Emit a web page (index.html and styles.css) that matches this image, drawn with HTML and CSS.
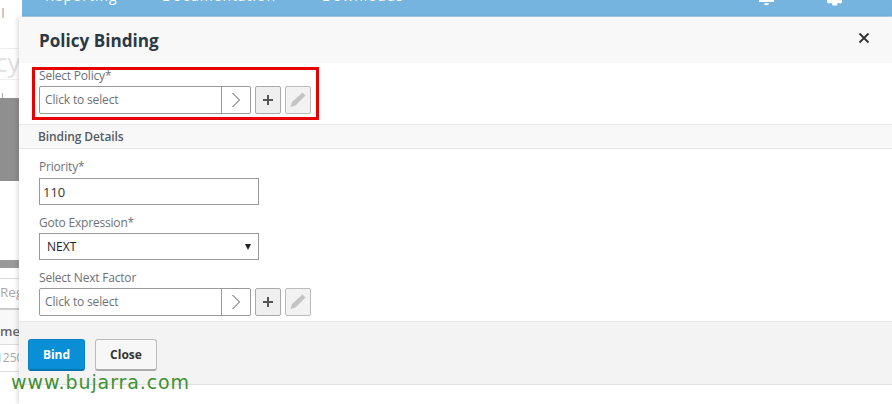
FILE: index.html
```html
<!DOCTYPE html>
<html lang="en">

<head>
    <meta charset="UTF-8">
    <meta name="viewport" content="width=device-width, initial-scale=1.0">
    <title>Policy Binding</title>
    <link rel="stylesheet" href="styles.css">
</head>

<body>
    <!-- Page behind the panel -->
    <div class="page">
        <div class="behind">
            <div class="behind-tick">I</div>
            <div class="behind-title">cy</div>
            <div class="behind-tick-2"></div>
            <div class="behind-grey"></div>
            <div class="behind-gap"></div>
            <div class="behind-band"></div>
            <div class="behind-gap-2"></div>
            <div class="behind-search">Reg</div>
            <div class="behind-head">me</div>
            <div class="behind-value">1250</div>
        </div>
        <div class="topbar">
            <div class="nav">
                <span class="nav-link nav-reporting">Reporting</span>
                <span class="nav-link nav-docs">Documentation</span>
                <span class="nav-link nav-downloads">Downloads</span>
                <svg class="nav-icon nav-bell" width="16" height="6" viewBox="0 0 16 6">
                    <path d="M0 0h15v2H0z M5 3.200h5c0 1.300-1 2-2.500 2S5 4.500 5 3.200z" fill="#fff" />
                </svg>
                <svg class="nav-icon nav-gear" width="16" height="6" viewBox="0 0 16 6">
                    <path d="M0 0h15v2.500l-1.500 1-2-.5-1 .5-.5 2H5.500l-.5-2-1-.5-2 .5-2-1z" fill="#fff" />
                </svg>
            </div>
        </div>
    </div>

    <!-- Policy Binding panel -->
    <div class="panel">
        <div class="panel-header">
            <h1>Policy Binding</h1>
            <svg class="close" width="12" height="12" viewBox="0 0 12 12">
                <path d="M1.500 1.500l9 9M10.500 1.500l-9 9" stroke="#333" stroke-width="1.800" fill="none" />
            </svg>
        </div>

        <div class="panel-top">
            <label>Select Policy*</label>
            <div class="picker-row">
                <div class="picker">
                    <span class="picker-text">Click to select</span>
                    <span class="picker-arrow">
                        <svg width="10" height="16" viewBox="0 0 10 16">
                            <path d="M1.500 1l7 7-7 7" stroke="#555" stroke-width="1" fill="none" />
                        </svg>
                    </span>
                </div>
                <button class="icon-btn" type="button">
                    <svg width="12" height="12" viewBox="0 0 12 12">
                        <path d="M5 1h2v4h4v2H7v4H5V7H1V5h4z" fill="#555" />
                    </svg>
                </button>
                <button class="icon-btn disabled" type="button">
                    <svg width="18" height="18" viewBox="0 0 18 18">
                        <path d="M13.500 1.500l3 3-10 10-5 1.500 1.500-5z" fill="#c4c4c4" />
                    </svg>
                </button>
            </div>
            <div class="highlight"></div>
        </div>

        <div class="section-title">Binding Details</div>

        <div class="panel-body">
            <label>Priority*</label>
            <input class="field" type="text" value="110">

            <label>Goto Expression*</label>
            <div class="field select">
                <span>NEXT</span>
                <span class="select-arrow"></span>
            </div>

            <label>Select Next Factor</label>
            <div class="picker-row">
                <div class="picker">
                    <span class="picker-text">Click to select</span>
                    <span class="picker-arrow">
                        <svg width="10" height="16" viewBox="0 0 10 16">
                            <path d="M1.500 1l7 7-7 7" stroke="#555" stroke-width="1" fill="none" />
                        </svg>
                    </span>
                </div>
                <button class="icon-btn" type="button">
                    <svg width="12" height="12" viewBox="0 0 12 12">
                        <path d="M5 1h2v4h4v2H7v4H5V7H1V5h4z" fill="#555" />
                    </svg>
                </button>
                <button class="icon-btn disabled" type="button">
                    <svg width="18" height="18" viewBox="0 0 18 18">
                        <path d="M13.500 1.500l3 3-10 10-5 1.500 1.500-5z" fill="#c4c4c4" />
                    </svg>
                </button>
            </div>
        </div>

        <div class="panel-footer">
            <button class="btn btn-primary" type="button">Bind</button>
            <button class="btn" type="button">Close</button>
        </div>
    </div>

    <div class="watermark">www.bujarra.com</div>
</body>

</html>
```

FILE: styles.css
```css
html,
body {
    margin: 0;
    padding: 0;
    height: 404px;
    overflow: hidden;
    background-color: #fff;
    font-family: "Open Sans", Arial, sans-serif;
}

.page {
    position: relative;
    height: 404px;
}

.topbar {
    position: absolute;
    top: 0;
    left: 22px;
    right: 0;
    height: 16px;
    background-color: #74b4de;
    border-bottom: 1px solid #a9cde6;
    overflow: hidden;
}

.nav {
    position: relative;
    height: 16px;
}

.nav-link {
    position: absolute;
    top: -16px;
    color: #fff;
    font-size: 14px;
    line-height: 24px;
    letter-spacing: 0.95px;
}

.nav-reporting {
    left: 23px;
}

.nav-docs {
    left: 140px;
}

.nav-downloads {
    left: 300px;
}

.nav-icon {
    position: absolute;
    top: 0;
}

.nav-bell {
    left: 737px;
}

.nav-gear {
    left: 805px;
}

/* sliver of the page that shows left of the panel */
.behind {
    width: 19px;
    height: 404px;
    overflow: hidden;
}

.behind-tick {
    height: 48px;
    box-sizing: border-box;
    padding: 5px 0 0 1px;
    font-size: 14px;
    line-height: 16px;
    color: #aaa;
}

.behind-title {
    height: 30px;
    border-top: 1px solid #eee;
    border-bottom: 1px solid #eee;
    font-size: 26px;
    line-height: 26px;
    color: #e2e2e2;
    text-indent: -5px;
    white-space: nowrap;
}

.behind-tick-2 {
    height: 18px;
    margin-left: 2px;
    width: 1px;
    background: linear-gradient(to bottom, transparent 13px, #aaa 13px);
}

.behind-grey {
    height: 83px;
    background-color: #8f8f8f;
}

.behind-gap {
    height: 79px;
}

.behind-band {
    height: 8px;
    background-color: #999;
}

.behind-gap-2 {
    height: 10px;
}

.behind-search {
    height: 29px;
    border-top: 1px solid #ddd;
    border-bottom: 2px solid #ccc;
    font-size: 13.500px;
    line-height: 27px;
    color: #aaa;
    white-space: nowrap;
}

.behind-head {
    height: 34px;
    background-color: #f8f8f8;
    font-size: 13px;
    font-weight: 600;
    line-height: 42px;
    color: #666;
    white-space: nowrap;
}

.behind-value {
    height: 26px;
    border-top: 1px solid #ddd;
    border-bottom: 1px solid #ddd;
    font-size: 12px;
    line-height: 26px;
    color: #aaa;
    text-indent: -4px;
    white-space: nowrap;
}

/* the panel sits on top of the page */
.panel {
    position: absolute;
    top: 17px;
    left: 19px;
    right: 0;
    bottom: 0;
    background: white;
    box-shadow: -2px 0 4px rgba(0, 0, 0, 0.12);
}

.panel-header {
    display: flex;
    align-items: center;
    justify-content: space-between;
    height: 46px;
    padding: 0 22px 0 20px;
    background-color: #f8f8f8;
}

.panel-header h1 {
    margin: 0;
    font-size: 17.100px;
    font-weight: 700;
    color: #2b3a44;
}

.close {
    margin-top: -4px;
}

label {
    display: block;
    font-size: 12px;
    line-height: 16px;
    letter-spacing: -0.2px;
    color: #6b7177;
}

.panel-top {
    position: relative;
    height: 62px;
    padding: 5px 20px 0;
    border-bottom: 1px solid #e6e6e6;
    box-sizing: border-box;
}

.highlight {
    position: absolute;
    top: 4px;
    left: 13px;
    width: 281px;
    height: 47px;
    border: 3px solid #e60000;
}

.picker-row {
    display: flex;
    gap: 4px;
    margin-top: 2px;
}

.picker {
    display: flex;
    width: 212px;
    height: 28px;
    box-sizing: border-box;
    border: 1px solid #999;
    border-radius: 2px;
    background: white;
}

.picker-text {
    flex: 1;
    padding-left: 5px;
    font-size: 12px;
    line-height: 26px;
    letter-spacing: -0.15px;
    color: #6b7177;
}

.picker-arrow {
    display: flex;
    align-items: center;
    justify-content: center;
    width: 28px;
    border-left: 1px solid #999;
}

.icon-btn {
    display: flex;
    align-items: center;
    justify-content: center;
    width: 26px;
    height: 28px;
    padding: 0;
    border: 1px solid #aaa;
    border-radius: 2px;
    background: #efefef;
}

.icon-btn.disabled {
    border-color: #bbb;
    background: #f2f2f2;
}

.section-title {
    height: 23px;
    padding-left: 19px;
    background-color: #f8f8f8;
    border-bottom: 1px solid #e6e6e6;
    font-size: 12px;
    font-weight: 600;
    line-height: 24px;
    letter-spacing: -0.1px;
    color: #555c63;
}

.panel-body {
    height: 173px;
    padding: 10px 20px 0;
    box-sizing: border-box;
    border-bottom: 1px solid #e6e6e6;
}

.field {
    display: block;
    width: 220px;
    height: 27px;
    margin: 3px 0 10px;
    padding: 0 3px;
    box-sizing: border-box;
    border: 1px solid #999;
    background: white;
    font-family: "Open Sans", Arial, sans-serif;
    font-size: 13px;
    color: #333;
}

.select {
    display: flex;
    align-items: center;
    justify-content: space-between;
    margin-top: 2px;
    padding: 0 7px;
    color: #222;
    font-size: 12px;
}

.select-arrow {
    width: 0;
    height: 0;
    border-left: 3px solid transparent;
    border-right: 3px solid transparent;
    border-top: 6px solid #222;
}

.panel-footer {
    display: flex;
    gap: 10px;
    height: 63px;
    padding: 17px 9px 0;
    box-sizing: border-box;
    background-color: #f3f3f3;
    border-bottom: 1px solid #e0e0e0;
}

.btn {
    width: 62px;
    height: 32px;
    padding: 0;
    border: 1px solid #bbb;
    border-bottom: 2px solid #aaa;
    border-radius: 3px;
    background: #f7f7f7;
    font-family: "Open Sans", Arial, sans-serif;
    font-size: 12px;
    font-weight: 700;
    color: #333;
}

.btn-primary {
    width: 57px;
    border-color: #0885c8;
    border-bottom-color: #0773ad;
    background: #0a8fd6;
    color: white;
}

.watermark {
    position: absolute;
    top: 369px;
    left: 11px;
    font-family: "DejaVu Sans", sans-serif;
    font-size: 19px;
    line-height: 26px;
    letter-spacing: 0.9px;
    color: #3f9132;
}
```
